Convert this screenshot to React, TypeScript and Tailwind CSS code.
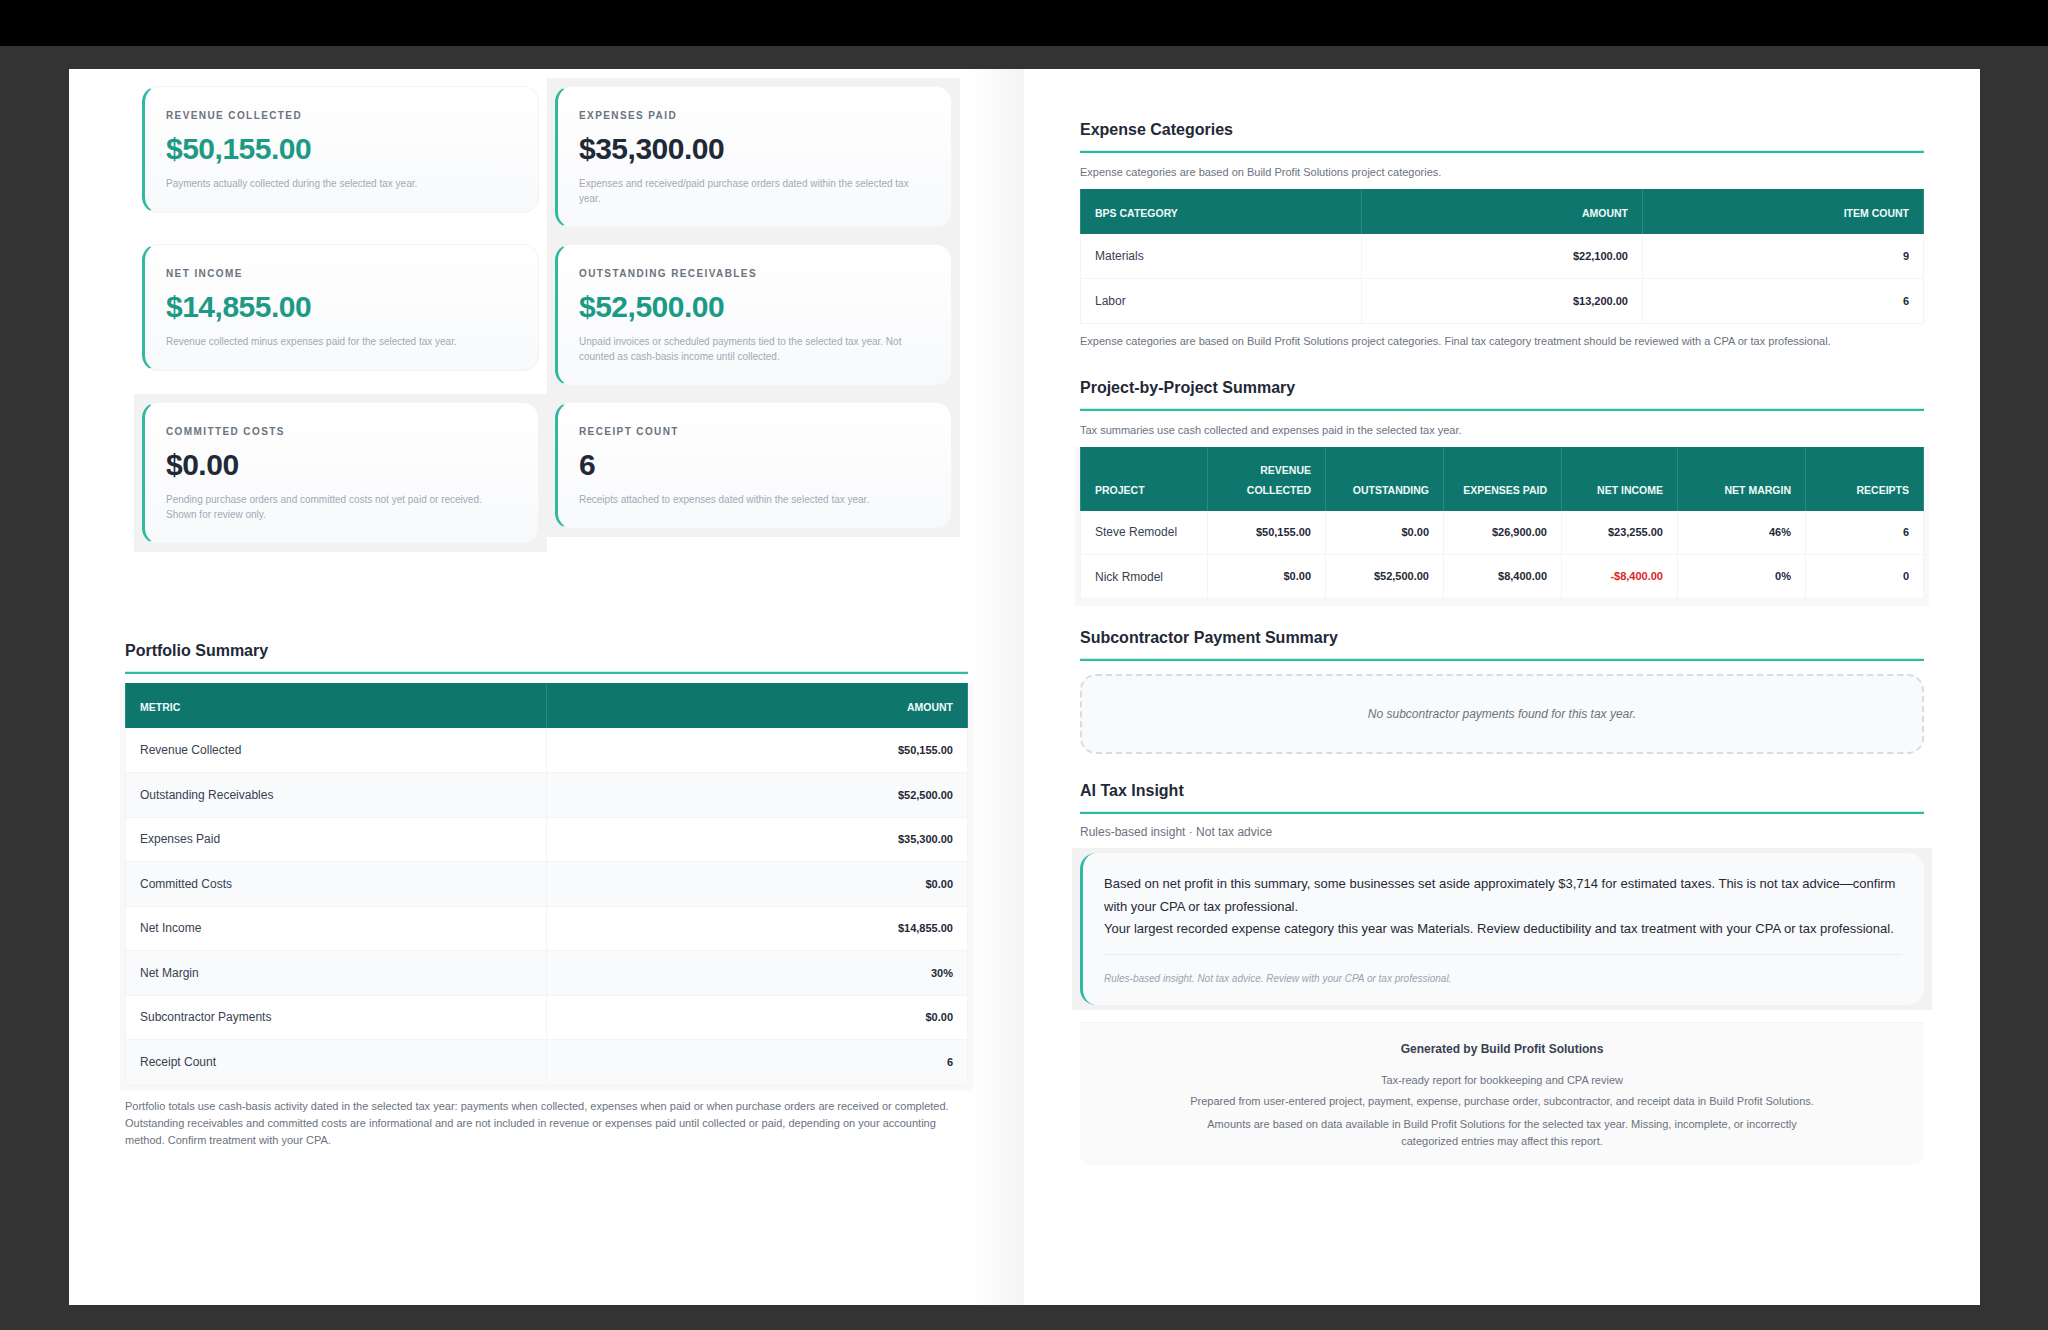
const font = { fontFamily: '"Liberation Sans", Arial, sans-serif' };

type Stat = { label: string; value: string; note: string; accent?: boolean; halo?: boolean };

const stats: Stat[] = [
  { label: "Revenue Collected", value: "$50,155.00", note: "Payments actually collected during the selected tax year.", accent: true },
  { label: "Expenses Paid", value: "$35,300.00", note: "Expenses and received/paid purchase orders dated within the selected tax year.", halo: true },
  { label: "Net Income", value: "$14,855.00", note: "Revenue collected minus expenses paid for the selected tax year.", accent: true },
  { label: "Outstanding Receivables", value: "$52,500.00", note: "Unpaid invoices or scheduled payments tied to the selected tax year. Not counted as cash-basis income until collected.", accent: true, halo: true },
  { label: "Committed Costs", value: "$0.00", note: "Pending purchase orders and committed costs not yet paid or received. Shown for review only.", halo: true },
  { label: "Receipt Count", value: "6", note: "Receipts attached to expenses dated within the selected tax year.", halo: true },
];

const portfolio = [
  ["Revenue Collected", "$50,155.00"],
  ["Outstanding Receivables", "$52,500.00"],
  ["Expenses Paid", "$35,300.00"],
  ["Committed Costs", "$0.00"],
  ["Net Income", "$14,855.00"],
  ["Net Margin", "30%"],
  ["Subcontractor Payments", "$0.00"],
  ["Receipt Count", "6"],
];

const projects = [
  ["Steve Remodel", "$50,155.00", "$0.00", "$26,900.00", "$23,255.00", "46%", "6"],
  ["Nick Rmodel", "$0.00", "$52,500.00", "$8,400.00", "-$8,400.00", "0%", "0"],
];

function StatCard({ stat }: { stat: Stat }) {
  return (
    <div className={`-m-2 self-start p-2 ${stat.halo ? "bg-[#f2f2f2]" : ""}`}>
      <div className="rounded-2xl border border-[#f1f3f5] border-l-[3px] border-l-[#2fb8a2] bg-gradient-to-b from-white to-[#f8f9fb] pb-[21px] pl-[21px] pr-[24px] pt-[22px]">
        <div className="text-[10px] font-bold uppercase leading-[13px] tracking-[0.14em] text-[#6b7280]">{stat.label}</div>
        <div className={`mt-[9px] text-[30px] font-bold leading-[36px] tracking-[-0.5px] ${stat.accent ? "text-[#1b9a85]" : "text-[#1f2937]"}`}>
          {stat.value}
        </div>
        <p className="mt-[9px] text-[10px] leading-[15px] text-[#a3a9b5]">{stat.note}</p>
      </div>
    </div>
  );
}

function Heading({ title }: { title: string }) {
  return (
    <div>
      <h2 className="text-[16px] font-bold leading-[20px] text-[#1f2937]">{title}</h2>
      <div className="mt-[10px] h-[3px] border-t border-[#c8f3ec] bg-[#2fb8a2]" />
    </div>
  );
}

function Th({ children, right }: { children: React.ReactNode; right?: boolean }) {
  return (
    <th className={`border-x border-[#2b8a80] px-[14px] pb-[11px] align-bottom text-[10.5px] font-bold uppercase leading-[20px] text-[#eefbf8] ${right ? "text-right" : "text-left"}`}>
      {children}
    </th>
  );
}

export default function App() {
  return (
    <div style={font} className="h-[1330px] w-[2048px] overflow-hidden bg-[#333333]">
      <div className="h-[46px] bg-black" />
      <div className="flex pl-[69px] pt-[23px]">
        {/* left sheet */}
        <div className="h-[1236px] w-[955px] bg-gradient-to-r from-white from-[94%] to-[#f4f4f4] pl-[56px] pt-[17px]">
          <div className="ml-[17px] grid w-[810px] grid-cols-2 gap-4">
            {stats.map((s) => (
              <StatCard key={s.label} stat={s} />
            ))}
          </div>

          <div className="mt-[97px] w-[843px]">
            <Heading title="Portfolio Summary" />
            <div className="-mx-[5px] mt-[9px] bg-[#f8f8f8] px-[5px] pb-[6px]">
              <table className="w-full table-fixed border-collapse">
                <thead>
                  <tr className="h-[45px] bg-[#0f766e]">
                    <Th>Metric</Th>
                    <Th right>Amount</Th>
                  </tr>
                </thead>
                <tbody>
                  {portfolio.map(([name, amount], i) => (
                    <tr key={name} className={`h-[44.5px] border-b border-[#f3f4f6] ${i % 2 ? "bg-[#f9fafb]" : "bg-white"}`}>
                      <td className="border-x border-[#f3f4f6] px-[14px] text-[12px] text-[#374151]">{name}</td>
                      <td className="border-x border-[#f3f4f6] px-[14px] text-right text-[11px] font-bold text-[#1f2937]">{amount}</td>
                    </tr>
                  ))}
                </tbody>
              </table>
            </div>
            <p className="mt-[7px] text-[11px] leading-[17px] text-[#6b7280]">
              Portfolio totals use cash-basis activity dated in the selected tax year: payments when collected, expenses when paid or when purchase orders are received or completed. Outstanding receivables and committed costs are informational and are not included in revenue or expenses paid until collected or paid, depending on your accounting method. Confirm treatment with your CPA.
            </p>
          </div>
        </div>

        {/* right sheet */}
        <div className="h-[1236px] w-[956px] bg-white pl-[56px] pr-[56px] pt-[51px]">
          <Heading title="Expense Categories" />
          <p className="mt-[12px] text-[11px] leading-[15px] text-[#6b7280]">Expense categories are based on Build Profit Solutions project categories.</p>
          <table className="mt-[9px] w-full table-fixed border-collapse">
            <thead>
              <tr className="h-[45px] bg-[#0f766e]">
                <Th>BPS Category</Th>
                <Th right>Amount</Th>
                <Th right>Item Count</Th>
              </tr>
            </thead>
            <tbody>
              {[["Materials", "$22,100.00", "9"], ["Labor", "$13,200.00", "6"]].map(([a, b, c]) => (
                <tr key={a} className="h-[44.5px] border-b border-[#f3f4f6] bg-white">
                  <td className="border-x border-[#f3f4f6] px-[14px] text-[12px] text-[#374151]">{a}</td>
                  <td className="border-x border-[#f3f4f6] px-[14px] text-right text-[11px] font-bold text-[#1f2937]">{b}</td>
                  <td className="border-x border-[#f3f4f6] px-[14px] text-right text-[11px] font-bold text-[#1f2937]">{c}</td>
                </tr>
              ))}
            </tbody>
          </table>
          <p className="mt-[10px] text-[11px] leading-[15px] text-[#6b7280]">
            Expense categories are based on Build Profit Solutions project categories. Final tax category treatment should be reviewed with a CPA or tax professional.
          </p>

          <div className="mt-[29px]">
            <Heading title="Project-by-Project Summary" />
          </div>
          <p className="mt-[12px] text-[11px] leading-[15px] text-[#6b7280]">Tax summaries use cash collected and expenses paid in the selected tax year.</p>
          <div className="-mx-[5px] mt-[9px] bg-[#f8f8f8] px-[5px] pb-[7px]">
            <table className="w-full table-fixed border-collapse">
              <colgroup>
                <col className="w-[127px]" />
                <col className="w-[118px]" />
                <col className="w-[118px]" />
                <col className="w-[118px]" />
                <col className="w-[116px]" />
                <col className="w-[128px]" />
                <col className="w-[118px]" />
              </colgroup>
              <thead>
                <tr className="h-[64px] bg-[#0f766e]">
                  <Th>Project</Th>
                  <Th right>Revenue Collected</Th>
                  <Th right>Outstanding</Th>
                  <Th right>Expenses Paid</Th>
                  <Th right>Net Income</Th>
                  <Th right>Net Margin</Th>
                  <Th right>Receipts</Th>
                </tr>
              </thead>
              <tbody>
                {projects.map((row) => (
                  <tr key={row[0]} className="h-[44px] border-b border-[#f3f4f6] bg-white">
                    {row.map((cell, i) => (
                      <td
                        key={i}
                        className={`border-x border-[#f3f4f6] px-[14px] ${i === 0 ? "text-[12px] text-[#374151]" : "text-right text-[11px] font-bold text-[#1f2937]"} ${cell.startsWith("-") ? "text-[#dc2626]" : ""}`}
                      >
                        {cell}
                      </td>
                    ))}
                  </tr>
                ))}
              </tbody>
            </table>
          </div>

          <div className="mt-[22px]">
            <Heading title="Subcontractor Payment Summary" />
          </div>
          <div className="mt-[13px] flex h-[80px] items-center justify-center rounded-2xl border-2 border-dashed border-[#d8dce1] bg-[#f9fafb] text-[12px] italic text-[#6b7280]">
            No subcontractor payments found for this tax year.
          </div>

          <div className="mt-[27px]">
            <Heading title="AI Tax Insight" />
          </div>
          <p className="mt-[11px] text-[12px] leading-[15px] text-[#6b7280]">Rules-based insight · Not tax advice</p>
          <div className="-mx-2 mt-[8px] bg-[#f2f2f2] px-2 py-[5px]">
            <div className="rounded-2xl border-l-[3px] border-l-[#2fb8a2] bg-[#f9fafb] pb-[19px] pl-[21px] pr-[22px] pt-[20px]">
              <div className="text-[13px] leading-[22.5px] text-[#1f2937]">
                <p>Based on net profit in this summary, some businesses set aside approximately $3,714 for estimated taxes. This is not tax advice—confirm with your CPA or tax professional.</p>
                <p>Your largest recorded expense category this year was Materials. Review deductibility and tax treatment with your CPA or tax professional.</p>
              </div>
              <p className="mt-[13px] border-t border-[#e9ebee] pt-[16px] text-[10px] italic leading-[15px] text-[#9ca3af]">
                Rules-based insight. Not tax advice. Review with your CPA or tax professional.
              </p>
            </div>
          </div>

          <div className="mt-[12px] h-[143px] rounded-b-xl border-t border-[#f3f4f6] bg-[#fafafa] px-[100px] pt-[18px] text-center text-[11px] text-[#6b7280]">
            <p className="text-[12px] font-bold leading-[16px] text-[#374151]">Generated by Build Profit Solutions</p>
            <p className="mt-[16px] leading-[15px]">Tax-ready report for bookkeeping and CPA review</p>
            <p className="mt-[6px] leading-[15px]">Prepared from user-entered project, payment, expense, purchase order, subcontractor, and receipt data in Build Profit Solutions.</p>
            <p className="mt-[7px] leading-[17px]">Amounts are based on data available in Build Profit Solutions for the selected tax year. Missing, incomplete, or incorrectly categorized entries may affect this report.</p>
          </div>
        </div>
      </div>
    </div>
  );
}
